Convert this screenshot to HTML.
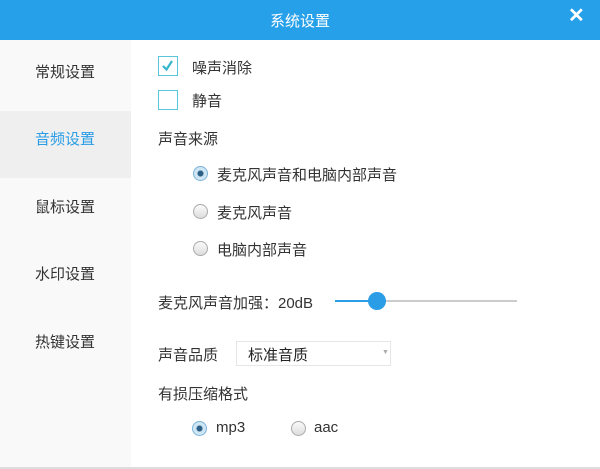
<!DOCTYPE html><html><head><meta charset="utf-8"><style>
body{margin:0;width:600px;height:469px;overflow:hidden;background:#fff;font-family:"Liberation Sans","Noto Sans CJK SC",sans-serif;color:#333;font-size:15px;position:relative}
.t{position:absolute;white-space:nowrap}
.bar{position:absolute;left:0;top:0;width:600px;height:40px;background:#27a0ea}
.side{position:absolute;left:0;top:40px;width:131px;height:427px;background:#f9f9f9}
.cb{position:absolute;width:20px;height:20px;border:1.5px solid #5bc6d9;box-sizing:border-box;background:#fff}
.rd{position:absolute;width:15px;height:15px;border-radius:50%;border:1px solid #aaa;box-sizing:border-box;background:linear-gradient(#fafafa,#ddd)}
.rd.on{border-color:#7ab3d8;background:radial-gradient(#2b5f86 0 2.5px,#cfe6f5 3.5px)}
</style></head><body>
<div class="bar"></div>
<div class="t" style="left:0;width:600px;text-align:center;top:10px;color:#fff;font-size:15px">系统设置</div>
<div class="t" style="left:568px;top:3px;color:#fff;font-size:20px;font-weight:bold">✕</div>
<div class="side"></div>
<div style="position:absolute;left:0;top:111px;width:131px;height:67px;background:#efefef"></div>
<div class="t" style="left:35px;top:61px">常规设置</div>
<div class="t" style="left:35px;top:128px;color:#2a9de6">音频设置</div>
<div class="t" style="left:35px;top:196px">鼠标设置</div>
<div class="t" style="left:35px;top:263px">水印设置</div>
<div class="t" style="left:35px;top:331px">热键设置</div>
<div style="position:absolute;left:0;top:467px;width:600px;height:2px;background:#ddd"></div>
<div class="cb" style="left:158px;top:56px"><svg width="17" height="17" viewBox="0 0 17 17" style="position:absolute;left:0;top:0"><path d="M4 9 L7.5 12.5 L13 4" stroke="#35b6cd" stroke-width="2.2" fill="none"/></svg></div>
<div class="t" style="left:192px;top:57px">噪声消除</div>
<div class="cb" style="left:158px;top:90px"></div>
<div class="t" style="left:192px;top:90px">静音</div>
<div class="t" style="left:158px;top:128px">声音来源</div>
<div class="rd on" style="left:193px;top:166px"></div>
<div class="t" style="left:217px;top:164px">麦克风声音和电脑内部声音</div>
<div class="rd" style="left:193px;top:204px"></div>
<div class="t" style="left:217px;top:202px">麦克风声音</div>
<div class="rd" style="left:193px;top:241px"></div>
<div class="t" style="left:217px;top:239px">电脑内部声音</div>
<div class="t" style="left:158px;top:292px">麦克风声音加强：20dB</div>
<div style="position:absolute;left:335px;top:300px;width:182px;height:2px;background:#ccc"></div>
<div style="position:absolute;left:335px;top:300px;width:42px;height:2px;background:#2a9de6"></div>
<div style="position:absolute;left:368px;top:292px;width:18px;height:18px;border-radius:50%;background:#2a9de6"></div>
<div class="t" style="left:158px;top:344px">声音品质</div>
<div style="position:absolute;left:236px;top:341px;width:155px;height:25px;border:1px solid #e6e6e6;box-sizing:border-box"></div>
<div class="t" style="left:248px;top:344px;color:#222">标准音质</div>
<div class="t" style="left:382px;top:349px;font-size:7px;color:#aaa">▼</div>
<div class="t" style="left:158px;top:383px">有损压缩格式</div>
<div class="rd on" style="left:192px;top:421px"></div>
<div class="t" style="left:216px;top:419px">mp3</div>
<div class="rd" style="left:291px;top:421px"></div>
<div class="t" style="left:314px;top:419px">aac</div>
</body></html>
